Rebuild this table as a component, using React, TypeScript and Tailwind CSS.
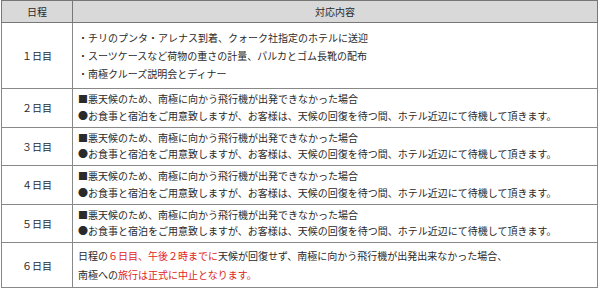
const rainRow = [
  "■悪天候のため、南極に向かう飛行機が出発できなかった場合",
  "●お食事と宿泊をご用意致しますが、お客様は、天候の回復を待つ間、ホテル近辺にて待機して頂きます。",
]

const days = ["２日目", "３日目", "４日目", "５日目"]

export default function App() {
  return (
    <div
      className="h-[292px] w-[600px] bg-white text-[10px] text-[#2a2a2a]"
      style={{ fontFamily: '"Noto Sans CJK JP", sans-serif' }}
    >
      <table className="ml-px w-[597px] table-fixed border-collapse border border-[#555]">
        <colgroup>
          <col className="w-[71px]" />
          <col />
        </colgroup>
        <thead>
          <tr className="h-[22px] bg-[#d9d9d9]">
            <th className="border border-[#777] font-normal">日程</th>
            <th className="border border-[#777] font-normal">対応内容</th>
          </tr>
        </thead>
        <tbody>
          <tr className="h-[66px]">
            <td className="border border-[#888] text-center">１日目</td>
            <td className="border border-[#888] px-[5px] leading-[18px]">
              <div>・チリのプンタ・アレナス到着、クォーク社指定のホテルに送迎</div>
              <div>・スーツケースなど荷物の重さの計量、パルカとゴム長靴の配布</div>
              <div>・南極クルーズ説明会とディナー</div>
            </td>
          </tr>
          {days.map((d) => (
            <tr key={d} className="h-[38.5px]">
              <td className="border border-[#888] text-center">{d}</td>
              <td className="border border-[#888] px-[5px] leading-[16.5px]">
                {rainRow.map((t) => (
                  <div key={t}>{t}</div>
                ))}
              </td>
            </tr>
          ))}
          <tr className="h-[45px]">
            <td className="border border-[#888] text-center">６日目</td>
            <td className="border border-[#888] px-[5px] leading-[19px]">
              <div>
                日程の<span className="text-[#e02424]">６日目、午後２時までに</span>
                天候が回復せず、南極に向かう飛行機が出発出来なかった場合、
              </div>
              <div>
                南極への<span className="text-[#e02424]">旅行は正式に中止となります。</span>
              </div>
            </td>
          </tr>
        </tbody>
      </table>
    </div>
  )
}
